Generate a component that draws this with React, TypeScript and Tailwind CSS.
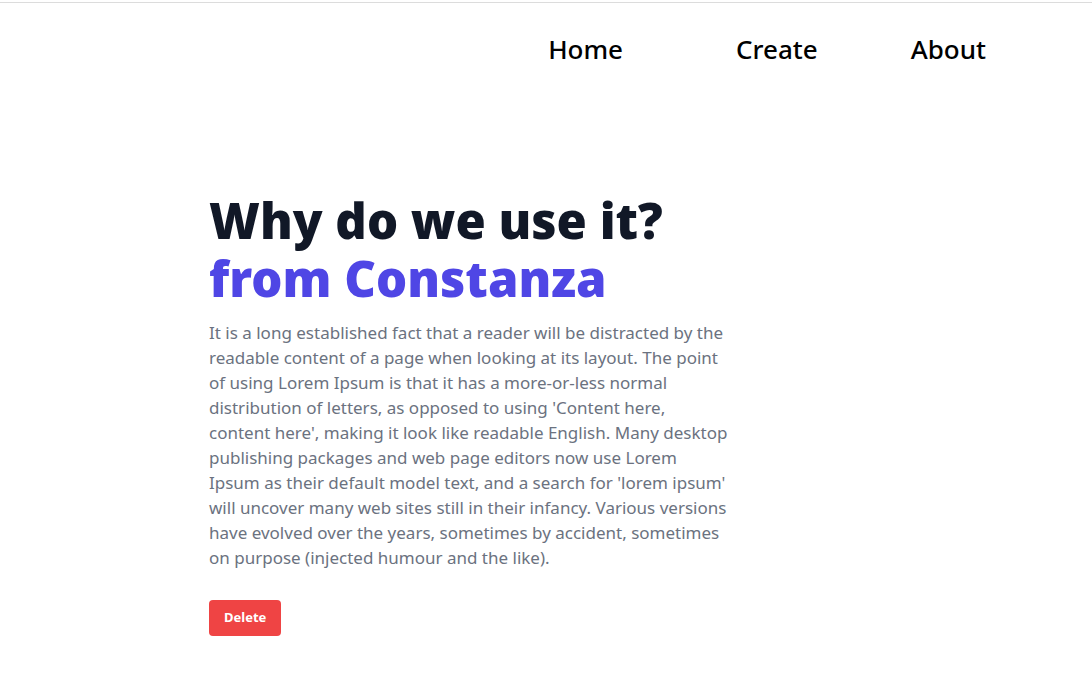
const App = () => {
  return (
    <div className="min-h-screen bg-white font-['Noto_Sans',sans-serif]">
      <div className="h-[3px] border-b border-[#dcdcdc]" />

      {/* Nav */}
      <nav className="flex justify-end pr-[106px] pt-[30px] text-[26px] leading-[32px] font-medium text-black">
        <a href="#" className="block">Home</a>
        <a href="#" className="block ml-[113px]">Create</a>
        <a href="#" className="block ml-[93px]">About</a>
      </nav>

      {/* Content */}
      <main className="pl-[209px] pt-[126px]">
        <h1 className="text-[49px] leading-[58px] font-black text-[#111827]">
          Why do we use it?
          <span className="block text-[#4f46e5]">from Constanza</span>
        </h1>
        <p className="mt-[13px] w-[520px] text-[17px] leading-[25px] text-[#6b7280]">
          It is a long established fact that a reader will be distracted by the readable content of a page when
          looking at its layout. The point of using Lorem Ipsum is that it has a more-or-less normal distribution of
          letters, as opposed to using 'Content here, content here', making it look like readable English. Many
          desktop publishing packages and web page editors now use Lorem Ipsum as their default model text, and a
          search for 'lorem ipsum' will uncover many web sites still in their infancy. Various versions have evolved
          over the years, sometimes by accident, sometimes on purpose (injected humour and the like).
        </p>
        <button className="mt-[30px] h-[36px] px-[15px] rounded bg-[#ef4444] text-[13px] font-bold text-white">
          Delete
        </button>
      </main>
    </div>
  );
};

export default App;
